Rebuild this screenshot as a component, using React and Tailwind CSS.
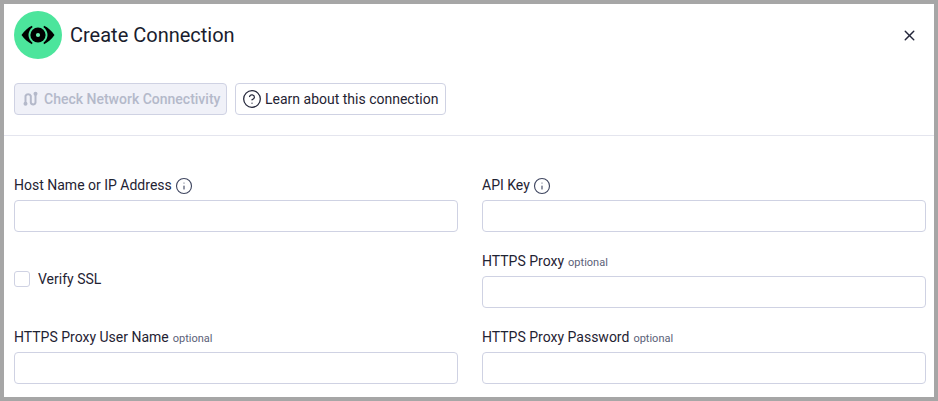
import React from 'react';
import { X, CircleHelp, Info } from 'lucide-react';

const LogoEye = () => (
  <div className="w-12 h-12 rounded-full bg-[#4ce59c] flex items-center justify-center shrink-0">
    <svg width="34" height="20" viewBox="0 0 34 20" fill="none">
      <path d="M11 0.8 C7 2.5 3.5 6 0.5 10 C3.5 14 7 17.5 11 19.2 L11.5 17.7 A9.4 9.4 0 0 1 11.5 2.3 Z" fill="#000" />
      <path d="M23 0.8 C27 2.5 30.5 6 33.5 10 C30.5 14 27 17.5 23 19.2 L22.5 17.7 A9.4 9.4 0 0 0 22.5 2.3 Z" fill="#000" />
      <circle cx="17" cy="10" r="7.6" fill="#000" />
      <circle cx="17" cy="10" r="2.1" fill="#6af0b0" />
    </svg>
  </div>
);

const NetworkIcon = () => (
  <svg width="16" height="16" viewBox="0 0 16 16" fill="none" stroke="#b4b9ca" strokeWidth="2" strokeLinecap="round">
    <path d="M2.5 12 V5 a2.9 2.9 0 0 1 5.3 0 V11.5 a2.4 2.4 0 0 0 4.7 0 V3" />
    <circle cx="12.5" cy="2.8" r="2" fill="#b4b9ca" stroke="none" />
    <circle cx="2.5" cy="12.8" r="2" fill="#b4b9ca" stroke="none" />
  </svg>
);

const Field = ({ label, optional, info }) => (
  <div className="flex flex-col">
    <div className={`flex h-[18px] mb-[6px] text-sm leading-[18px] text-[#1f2333] ${optional ? 'items-baseline' : 'items-center'}`}>
      <span>{label}</span>
      {optional && <span className="ml-1 text-[11px] text-[#5b6178]">optional</span>}
      {info && <Info size={18} strokeWidth={1.5} className="ml-[3px] mt-[2px] text-[#3f4660]" />}
    </div>
    <input className="w-full h-8 bg-white border border-[#cfd2e3] rounded-[4px] outline-none" />
  </div>
);

export default function App() {
  return (
    <div className="w-[938px] h-[401px] bg-white border-4 border-[#a6a6a6] overflow-hidden font-['Roboto',sans-serif]">
      <div className="h-[79px] pl-[10px] pr-[16px] pt-[7px]">
        <div className="flex items-center justify-between h-12">
          <div className="flex items-center gap-2">
            <LogoEye />
            <h1 className="text-xl text-[#1a1d2e]">Create Connection</h1>
          </div>
          <X size={17} strokeWidth={2} className="text-[#23263a]" />
        </div>
      </div>

      <div className="flex items-center gap-2 pl-[10px] h-8">
        <button className="flex items-center gap-[5px] h-8 w-[213px] pl-2 bg-[#f0f1f8] border border-[#cfd2e3] rounded-[4px] text-sm font-medium text-[#b4b9ca] whitespace-nowrap">
          <NetworkIcon />
          Check Network Connectivity
        </button>
        <button className="flex items-center gap-[3px] h-8 w-[211px] pl-[6px] bg-white border border-[#cfd2e3] rounded-[4px] text-sm text-[#1f2333] whitespace-nowrap">
          <CircleHelp size={20} strokeWidth={1.5} className="text-[#23263a]" />
          Learn about this connection
        </button>
      </div>

      <div className="mt-5 border-t border-[#e4e5ee]" />

      <div className="grid grid-cols-2 gap-x-6 gap-y-5 pl-[10px] pr-[8px] pt-10">
        <Field label="Host Name or IP Address" info />
        <Field label="API Key" info />
        <div className="flex items-center gap-2 pb-[2px]">
          <span className="w-4 h-4 bg-white border border-[#cfd2e3] rounded-[3px]" />
          <span className="text-sm text-[#1f2333]">Verify SSL</span>
        </div>
        <Field label="HTTPS Proxy" optional />
        <Field label="HTTPS Proxy User Name" optional />
        <Field label="HTTPS Proxy Password" optional />
      </div>
    </div>
  );
}
